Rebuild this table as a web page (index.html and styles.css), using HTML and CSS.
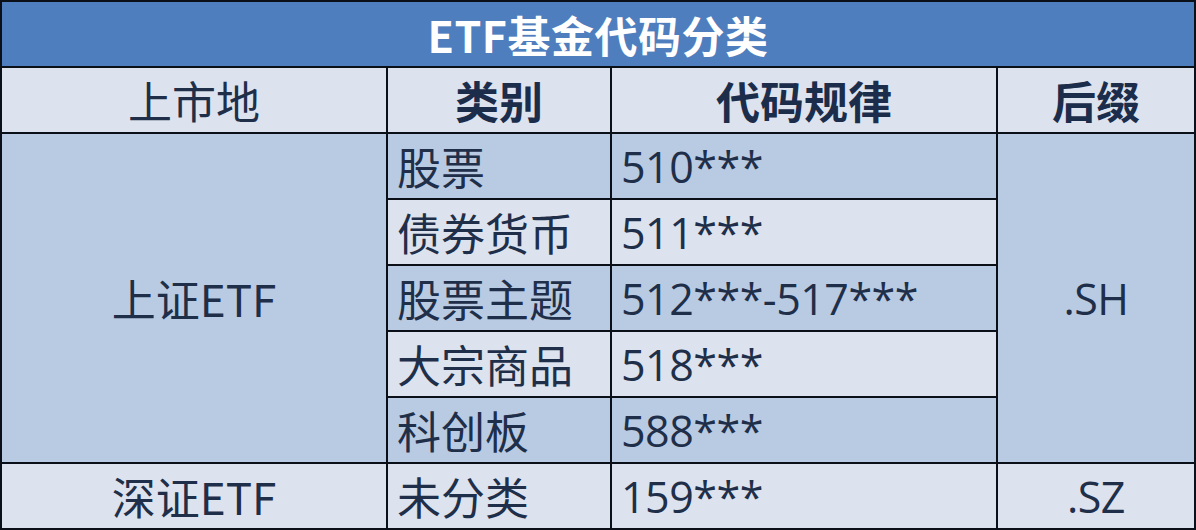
FILE: index.html
```html
<!DOCTYPE html>
<html lang="zh-CN">
<head>
<meta charset="utf-8">
<title>ETF基金代码分类</title>
<link rel="stylesheet" href="styles.css">
</head>
<body>
<div class="table">
  <div class="title">ETF基金代码分类</div>

  <div class="cell head center light">上市地</div>
  <div class="cell head center light bold">类别</div>
  <div class="cell head center light bold">代码规律</div>
  <div class="cell head center light bold">后缀</div>

  <div class="cell center blue sh-market">上证ETF</div>
  <div class="cell left blue">股票</div>
  <div class="cell left code blue">510***</div>
  <div class="cell center code blue sh-suffix">.SH</div>

  <div class="cell left light">债券货币</div>
  <div class="cell left code light">511***</div>

  <div class="cell left blue">股票主题</div>
  <div class="cell left code blue">512***-517***</div>

  <div class="cell left light">大宗商品</div>
  <div class="cell left code light">518***</div>

  <div class="cell left blue">科创板</div>
  <div class="cell left code blue">588***</div>

  <div class="cell center light">深证ETF</div>
  <div class="cell left light">未分类</div>
  <div class="cell left code light">159***</div>
  <div class="cell center code light">.SZ</div>
</div>
</body>
</html>
```

FILE: styles.css
```css
html, body {
  margin: 0;
  padding: 0;
  background: #ffffff;
}

.table {
  width: 1196px;
  height: 530px;
  box-sizing: border-box;
  display: grid;
  grid-template-columns: 384px 222px 384px 196px;
  grid-template-rows: repeat(8, 64px);
  gap: 2px;
  padding: 2px;
  background: #0b0f18;
  font-family: "Noto Sans CJK SC", "Noto Sans", sans-serif;
  color: #1f2f49;
}

.title {
  grid-column: 1 / 5;
  background: #4e7ebd;
  color: #ffffff;
  font-size: 43px;
  font-weight: 700;
  display: flex;
  align-items: center;
  justify-content: center;
  letter-spacing: 0.5px;
}

.cell {
  display: flex;
  align-items: center;
  font-size: 44px;
  line-height: 1;
}

.code {
  font-family: "Open Sans", "Noto Sans CJK SC", sans-serif;
  font-size: 43px;
  letter-spacing: -0.5px;
}

.center {
  justify-content: center;
}

.left {
  justify-content: flex-start;
  padding-left: 9px;
}

.light {
  background: #dde3ee;
}

.blue {
  background: #b9cbe3;
}

.bold {
  font-weight: 700;
  color: #1b2d4b;
}

.sh-market {
  grid-row: 3 / 8;
}

.sh-suffix {
  grid-column: 4;
  grid-row: 3 / 8;
}
```
